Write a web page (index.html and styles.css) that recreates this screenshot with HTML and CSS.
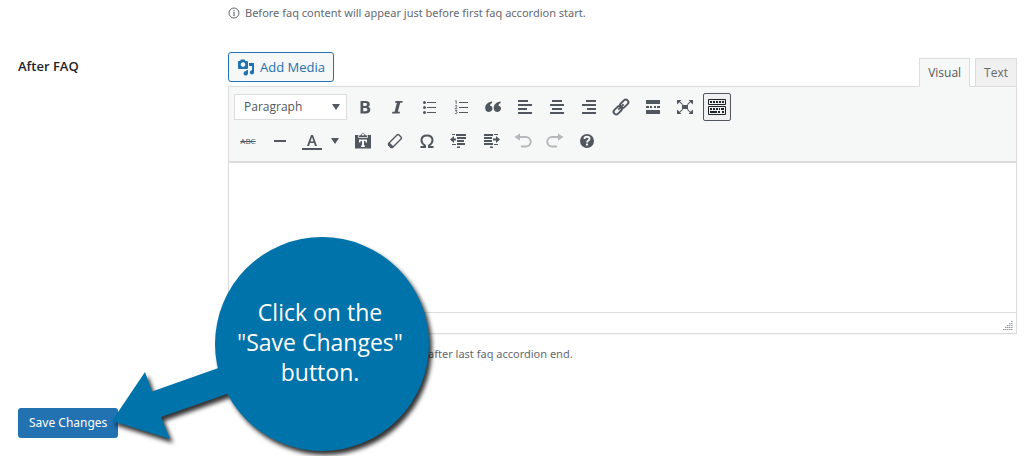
FILE: index.html
```
<!DOCTYPE html>
<html lang="en">
<head>
<meta charset="utf-8">
<meta name="viewport" content="width=device-width, initial-scale=1">
<title>FAQ Settings</title>
<link rel="stylesheet" href="styles.css">
</head>
<body>
<form class="settings">
  <div class="row">
    <div class="row-label"></div>
    <p class="description">
      <svg class="info" viewBox="0 0 12 12" aria-hidden="true"><circle cx="6" cy="6" r="5" fill="none" stroke="currentColor"/><path fill="currentColor" d="M5.400 5h1.200v4H5.400zM5.400 3h1.200v1.200H5.400z"/></svg>
      Before faq content will appear just before first faq accordion start.
    </p>
  </div>
  <div class="row">
    <label class="row-label" for="after-faq">After FAQ</label>
    <div class="field">
      <div class="editor-tools">
        <button type="button" class="add-media">
          <svg class="media-icon" viewBox="0 0 18 18" aria-hidden="true"><path fill="currentColor" fill-rule="evenodd" d="M1 3h2l1-1.500h3.500L8.500 3H10q1 0 1 1v6q0 1-1 1H2q-1 0-1-1V4q0-1 0-1zM6 4.300a2.300 2.300 0 1 0 .01 0z"/><path fill="currentColor" d="M12 5h5v9.500a2.100 2.100 0 1 1-2-2.200V8h-3zM11 12v3.500a2.200 2.200 0 1 1-1.500-2.300V12z"/></svg>
          Add Media
        </button>
        <div class="tabs" role="tablist">
          <button type="button" class="tab tab-active" role="tab" aria-selected="true">Visual</button>
          <button type="button" class="tab" role="tab" aria-selected="false">Text</button>
        </div>
      </div>
      <div class="editor">
        <div class="toolbar">
          <div class="tool-row">
            <span class="format">
              <select class="format-select" aria-label="Format"><option>Paragraph</option></select>
              <svg class="caret" viewBox="0 0 8 6" aria-hidden="true"><path fill="currentColor" d="M0 0h8L4 6z"/></svg>
            </span>
            <button type="button" class="tool" aria-label="Bold"><svg viewBox="0 0 20 20"><path fill="currentColor" fill-rule="evenodd" d="M5.500 4h5c2.800 0 4.300 1.100 4.300 3.200 0 1.300-.7 2.200-1.900 2.600 1.600.3 2.400 1.300 2.400 2.900 0 2.500-1.700 3.800-4.600 3.800H5.500zM8.200 6.100v2.800h2c1.200 0 1.800-.5 1.800-1.400 0-1-.6-1.400-1.900-1.400zM8.200 11v3.300h2.300c1.300 0 1.900-.6 1.900-1.700S11.700 11 10.400 11z"/></svg></button>
            <button type="button" class="tool" aria-label="Italic"><svg viewBox="0 0 20 20"><path fill="currentColor" d="M8.500 4h7.200l-.4 1.800h-2.100l-2.300 9h2.100l-.4 1.800H5l.4-1.800h2.200l2.300-9H8z"/></svg></button>
            <button type="button" class="tool" aria-label="Bulleted list"><svg viewBox="0 0 20 20"><path fill="currentColor" d="M8 5h9v1H8zM8 10h9v1H8zM8 15h9v1H8z"/><circle cx="5.500" cy="5.500" r="1.500" fill="currentColor"/><circle cx="5.500" cy="10.500" r="1.500" fill="currentColor"/><circle cx="5.500" cy="15.500" r="1.500" fill="currentColor"/></svg></button>
            <button type="button" class="tool" aria-label="Numbered list"><svg viewBox="0 0 20 20"><path fill="currentColor" d="M8 5h9v1H8zM8 10h9v1H8zM8 15h9v1H8z"/><path fill="none" stroke="currentColor" stroke-width=".8" d="M4.200 4.300l1-.8v3.500M4 8.900q1.200-1 2 0 .3.800-2 2.800h2.300M4 13.400h2l-1 1.300q1.300 0 1.200 1.100-.3 1.200-2.200.7"/></svg></button>
            <button type="button" class="tool" aria-label="Blockquote"><svg viewBox="0 0 20 20"><path fill="currentColor" d="M9.200 4.500v1.200C7.700 6.500 7 7.500 7 8.700c1.500 0 2.500 1.200 2.500 2.900S8.200 15 6 15c-2.300 0-3.800-1.500-3.800-4.100 0-3.200 2.700-6 7-6.400zM17.700 4.500v1.200c-1.500.8-2.200 1.800-2.200 3 1.500 0 2.500 1.200 2.500 2.900S16.700 15 14.500 15c-2.300 0-3.800-1.500-3.800-4.100 0-3.200 2.700-6 7-6.400z"/></svg></button>
            <button type="button" class="tool" aria-label="Align left"><svg viewBox="0 0 20 20"><path fill="currentColor" d="M3 3h10v2H3zM3 7h14v2H3zM3 11h9v2H3zM3 15h14v2H3z"/></svg></button>
            <button type="button" class="tool" aria-label="Align center"><svg viewBox="0 0 20 20"><path fill="currentColor" d="M5 3h10v2H5zM3 7h14v2H3zM5 11h10v2H5zM3 15h14v2H3z"/></svg></button>
            <button type="button" class="tool" aria-label="Align right"><svg viewBox="0 0 20 20"><path fill="currentColor" d="M7 3h10v2H7zM3 7h14v2H3zM8 11h9v2H8zM3 15h14v2H3z"/></svg></button>
            <button type="button" class="tool" aria-label="Insert link"><svg viewBox="0 0 20 20"><g fill="none" stroke="currentColor" stroke-width="1.900"><rect x="8.400" y="4.200" width="9.600" height="5.200" rx="2.600" transform="rotate(-45 13.200 6.800)"/><rect x="2" y="10.600" width="9.600" height="5.200" rx="2.600" transform="rotate(-45 6.800 13.200)"/><path d="M7.300 12.700l5.400-5.400"/></g></svg></button>
            <button type="button" class="tool" aria-label="Read more"><svg viewBox="0 0 20 20"><path fill="currentColor" d="M3 3h14v4H3zM3 9h3v2H3zM7 9h2v2H7zM11 9h2v2h-2zM14 9h3v2h-3zM3 13h14v4H3z"/></svg></button>
            <button type="button" class="tool" aria-label="Full screen"><svg viewBox="0 0 20 20"><path fill="currentColor" d="M7 8h6v4H7zM2 3h4.500L5 4.500 8 7.200l-.8.8L4.500 5.300 2 7.500zM18 3h-4.500L15 4.500 12 7.200l.8.8 2.700-2.700L18 7.500zM2 17h4.500L5 15.500l3-2.700-.8-.8-2.700 2.700L2 12.500zM18 17h-4.500l1.500-1.500-3-2.700.8-.8 2.700 2.700 2.500-2.200z"/></svg></button>
            <button type="button" class="tool tool-on" aria-label="Toolbar toggle" aria-pressed="true"><svg viewBox="0 0 20 20"><path fill="none" stroke="currentColor" d="M1.500 2.500h17v5h-17zM1.500 9.500h17v8h-17z"/><path fill="currentColor" d="M3 4h2v2H3zM6 4h2v2H6zM9 4h2v2H9zM12 4h2v2h-2zM15 4h2v2h-2zM3 11h2v2H3zM6 11h2v2H6zM9 11h2v2H9zM12 11h1v2h-1zM14 11h3v2h-3zM3 14h7v2H3zM11 14h2v2h-2zM15 14h2v2h-2z"/></svg></button>
          </div>
          <div class="tool-row">
            <button type="button" class="tool strike" aria-label="Strikethrough"><s>ABC</s></button>
            <button type="button" class="tool" aria-label="Horizontal line"><svg viewBox="0 0 20 20"><path fill="currentColor" d="M4 9h12v2H4z"/></svg></button>
            <button type="button" class="tool" aria-label="Text color"><svg viewBox="0 0 20 20"><path fill="currentColor" fill-rule="evenodd" d="M9 4h2l4 11h-2l-1-3H8l-1 3H5zM10 6l-1.500 4.500h3zM0 17h20v2H0z"/></svg></button>
            <button type="button" class="tool tool-caret" aria-label="Choose text color"><svg class="small-caret" viewBox="0 0 8 6"><path fill="currentColor" d="M0 0h8L4 6z"/></svg></button>
            <button type="button" class="tool" aria-label="Paste as text"><svg viewBox="0 0 20 20"><path fill="currentColor" fill-rule="evenodd" d="M2 4h16v13.500H2zM6 8.500v3h1.500V10H9v4.500H8V16h4v-1.500h-1V10h1.500v1.500H14v-3z"/><path fill="currentColor" stroke="#f6f7f7" stroke-width=".8" fill-rule="evenodd" d="M5.500 6.500V4.500l2.500-1q0-1.700 2-1.700t2 1.700l2.500 1v2zM10 3a.8.8 0 1 0 .01 0z"/></svg></button>
            <button type="button" class="tool" aria-label="Clear formatting"><svg viewBox="0 0 20 20"><path fill="none" stroke="currentColor" stroke-width="1.400" stroke-linejoin="round" d="M3.500 12.500L12 4q1-1 2 0l2 2q1 1 0 2l-8.500 8.500H6L3.500 14z"/><path fill="none" stroke="currentColor" stroke-width="2" d="M3.800 12.200l4 4"/></svg></button>
            <button type="button" class="tool" aria-label="Special character"><svg viewBox="0 0 20 20"><path fill="none" stroke="currentColor" stroke-width="2" d="M3.500 16H8v-1.500C5.800 13.200 4.500 11.500 4.500 9.300 4.500 6.300 6.700 4.500 10 4.500s5.500 1.800 5.500 4.800c0 2.200-1.300 3.900-3.500 5.200V16h4.500"/></svg></button>
            <button type="button" class="tool" aria-label="Decrease indent"><svg viewBox="0 0 20 20"><path fill="currentColor" d="M7 3h10v2H7zM8 6h9v2H8zM8 9h7v2H8zM8 12h8v2H8zM3 13h4v1H3zM8 15.500h3v1.500H8zM3 3h3v1H3zM1 8.500L5 5v2.500h2v2H5V12z"/></svg></button>
            <button type="button" class="tool" aria-label="Increase indent"><svg viewBox="0 0 20 20"><path fill="currentColor" d="M3 3h9v2H3zM3 6h8v2H3zM3 9h8v2H3zM3 12h9v2H3zM9 15.500h3v1.500H9zM13 3h4v1h-4zM13 13h4v1h-4zM19 8.500L15 5v2.500h-3v2h3V12z"/></svg></button>
            <button type="button" class="tool" aria-label="Undo" disabled><svg viewBox="0 0 20 20"><path fill="currentColor" d="M1.500 6L7 2.500v7z"/><path fill="none" stroke="currentColor" stroke-width="2" d="M6 6h7a4.700 4.700 0 0 1 0 9.400H8"/></svg></button>
            <button type="button" class="tool" aria-label="Redo" disabled><svg viewBox="0 0 20 20"><path fill="currentColor" d="M18.500 6L13 2.500v7z"/><path fill="none" stroke="currentColor" stroke-width="2" d="M14 6H7a4.700 4.700 0 0 0 0 9.400h5"/></svg></button>
            <button type="button" class="tool" aria-label="Keyboard shortcuts"><svg viewBox="0 0 20 20"><circle cx="10" cy="10" r="7" fill="currentColor"/><path fill="none" stroke="#f6f7f7" stroke-width="1.900" d="M7.500 8q0-2.200 2.500-2.200t2.500 2q0 1-1.300 1.800-1.200.7-1.200 1.900"/><path fill="#f6f7f7" d="M9 12.600h2v2H9z"/></svg></button>
          </div>
        </div>
        <textarea class="content" id="after-faq"></textarea>
        <div class="status">
          <svg class="grip" viewBox="0 0 10 9" aria-hidden="true"><path stroke="#8c9aa5" stroke-dasharray="1.500 .5" d="M8 .5h2M6 2.500h4M4 4.500h6M2 6.500h8M0 8.500h10"/></svg>
        </div>
      </div>
      <p class="description">
        <svg class="info" viewBox="0 0 12 12" aria-hidden="true"><circle cx="6" cy="6" r="5" fill="none" stroke="currentColor"/><path fill="currentColor" d="M5.400 5h1.200v4H5.400zM5.400 3h1.200v1.200H5.400z"/></svg>
        After faq contents will appear right after last faq accordion end.
      </p>
    </div>
  </div>
  <button type="submit" class="save">Save Changes</button>
</form>
<aside class="callout">
  <svg class="callout-shape" viewBox="0 0 330 226" aria-hidden="true"><g fill="#0073aa"><circle cx="221" cy="114" r="107"/><path d="M11 191L44 142 51 161.500 140 130V159L60 187 69 209z"/></g></svg>
  <p class="callout-text">Click on the<br>"Save Changes"<br>button.</p>
</aside>
</body>
</html>
```
FILE: styles.css
```
* {
  box-sizing: border-box;
}

body {
  margin: 0;
  background: #fff;
  color: #3c434a;
  font: 13px/18px "Open Sans", "Noto Sans", sans-serif;
  overflow: hidden;
}

button,
select,
textarea {
  font: inherit;
  color: inherit;
}

p {
  margin: 0;
}

.settings {
  display: flex;
  flex-direction: column;
  align-items: stretch;
  gap: 30px;
  padding: 4px 7px 18px 18px;
}

.row {
  display: grid;
  grid-template-columns: 210px 1fr;
}

.row-label {
  padding-top: 5px;
  color: #1d2327;
  font-weight: 600;
}

.description {
  display: flex;
  align-items: center;
  gap: 5px;
  color: #646970;
  font-family: "Noto Sans", sans-serif;
  font-size: 11px;
}

.info {
  width: 12px;
  height: 12px;
}

.editor-tools {
  display: flex;
  justify-content: space-between;
  align-items: flex-start;
  height: 34px;
}

.add-media {
  display: flex;
  align-items: center;
  gap: 5px;
  height: 30px;
  padding: 0 8px;
  border: 1px solid #2271b1;
  border-radius: 3px;
  background: #f6f7f7;
  color: #2271b1;
}

.media-icon {
  width: 18px;
  height: 18px;
}

.tabs {
  display: flex;
  gap: 5px;
  padding-top: 6px;
}

.tab {
  position: relative;
  height: 29px;
  padding: 0 8px;
  border: 1px solid #dcdcde;
  background: #f0f0f1;
  color: #646970;
  font-size: 12px;
}

.tab-active {
  border-bottom-color: #f6f7f7;
  background: #f6f7f7;
  color: #50575e;
}

.editor {
  border: 1px solid #dcdcde;
  box-shadow: 0 1px 1px #0000000a;
}

.toolbar {
  display: flex;
  flex-direction: column;
  gap: 6px;
  padding: 6px 5px;
  border-bottom: 2px solid #dcdcde;
  background: #f6f7f7;
  color: #50575e;
}

.tool-row {
  display: flex;
  align-items: center;
  gap: 4px;
}

.format {
  position: relative;
  width: 113px;
}

.format-select {
  display: block;
  width: 100%;
  height: 26px;
  padding: 0 9px;
  border: 1px solid #dcdcde;
  border-radius: 0;
  appearance: none;
  background: #fff;
  font-size: 12px;
}

.caret {
  position: absolute;
  top: 10px;
  right: 7px;
  width: 8px;
  height: 6px;
  pointer-events: none;
}

.tool {
  display: flex;
  align-items: center;
  justify-content: center;
  width: 28px;
  height: 28px;
  padding: 0;
  border: 1px solid transparent;
  border-radius: 2px;
  background: none;
}

.tool svg {
  flex: none;
  width: 20px;
  height: 20px;
}

.tool:disabled {
  color: #b5b8bb;
}

.tool-on {
  border-color: #50575e;
  background: #f0f0f1;
  color: #1d2327;
}

.tool-caret {
  width: 15px;
  margin-left: -3px;
}

.tool-row .small-caret {
  width: 8px;
  height: 6px;
}

.strike {
  font-size: 8px;
}

.tool-caret + .tool {
  margin-left: 3px;
}

.content {
  display: block;
  width: 100%;
  height: 149px;
  padding: 8px;
  border: 0;
  outline: 0;
  resize: none;
}

.status {
  display: flex;
  align-items: flex-end;
  justify-content: flex-end;
  height: 21px;
  padding: 3px;
  border-top: 1px solid #dcdcde;
}

.grip {
  width: 10px;
  height: 9px;
}

.editor + .description {
  margin-top: 11px;
}

.save {
  align-self: flex-start;
  height: 30px;
  margin-top: 15px;
  padding: 0 11px;
  border: 0;
  border-radius: 3px;
  background: #2271b1;
  color: #fff;
  font-family: "Noto Sans", sans-serif;
  font-size: 12px;
}

.callout {
  position: absolute;
  top: 230px;
  left: 101px;
  width: 330px;
}

.callout-shape {
  display: block;
  width: 330px;
  height: 226px;
  overflow: visible;
  filter: drop-shadow(3px 4px 2px #000c);
}

.callout-text {
  position: absolute;
  top: 67px;
  left: 114px;
  width: 210px;
  color: #fff;
  font: 23px/30px "Open Sans", "Noto Sans", sans-serif;
  text-align: center;
}
```
